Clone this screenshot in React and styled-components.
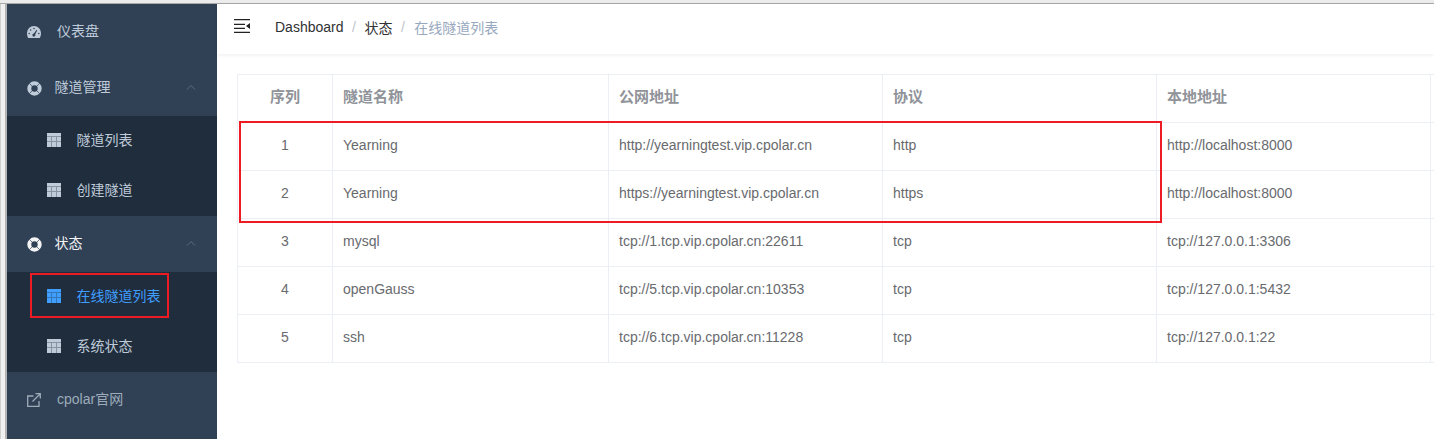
import styled, { createGlobalStyle } from "styled-components";

const rows = [
  ["1", "Yearning", "http://yearningtest.vip.cpolar.cn", "http", "http://localhost:8000"],
  ["2", "Yearning", "https://yearningtest.vip.cpolar.cn", "https", "http://localhost:8000"],
  ["3", "mysql", "tcp://1.tcp.vip.cpolar.cn:22611", "tcp", "tcp://127.0.0.1:3306"],
  ["4", "openGauss", "tcp://5.tcp.vip.cpolar.cn:10353", "tcp", "tcp://127.0.0.1:5432"],
  ["5", "ssh", "tcp://6.tcp.vip.cpolar.cn:11228", "tcp", "tcp://127.0.0.1:22"],
];

const GlobalStyle = createGlobalStyle`
  html, body {
    margin: 0;
    padding: 0;
    height: 439px;
    overflow: hidden;
    background: #fff;
  }
  body {
    font-family: "Liberation Sans", "Noto Sans CJK SC", sans-serif;
  }
`;

const Frame = styled.div`
  width: 1434px;
  height: 439px;
  position: relative;
  overflow: hidden;
  display: flex;
  flex-direction: column;
`;

const TopStrip = styled.div`
  height: 3px;
  background: #ececec;
  border-bottom: 1px solid #a9a9a9;
`;

const Body = styled.div`
  flex: 1;
  display: flex;
  min-height: 0;
`;

const LeftStrip = styled.div`
  width: 4px;
  background: #f0f0f0;
  border-left: 1px solid #cfcfcf;
  border-right: 2px solid #b4b4b4;
`;

const Sidebar = styled.nav`
  width: 210px;
  background: #304156;
  font-size: 14px;
  color: #bfcbd9;
`;

const MenuItem = styled.div`
  height: 56px;
  display: flex;
  align-items: center;
  padding-left: 20px;
  color: ${(p) => (p.$open ? "#f4f4f5" : p.$dim ? "#9eabb9" : "#bfcbd9")};
  position: relative;
`;

const MenuLabel = styled.span`
  margin-left: ${(p) => p.$gap}px;
  margin-bottom: 4px;
`;

const Arrow = styled.svg`
  position: absolute;
  right: 21px;
  top: 24px;
`;

const SubMenu = styled.div`
  background: #1f2d3d;
`;

const SubItem = styled.div`
  height: 50px;
  display: flex;
  align-items: center;
  padding-left: 40px;
  color: ${(p) => (p.$active ? "#409eff" : "#bfcbd9")};

  svg {
    margin-bottom: 2px;
  }
`;

const SubLabel = styled.span`
  margin-left: 15.5px;
  margin-bottom: 4px;
`;

const Main = styled.div`
  flex: 1;
  min-width: 0;
`;

const Header = styled.header`
  height: 50px;
  box-sizing: border-box;
  display: flex;
  align-items: center;
  background: #fff;
  box-shadow: 0 1px 4px rgba(0, 21, 41, 0.08);
  padding: 0 0 4px 17px;

  svg {
    margin-bottom: 3px;
  }
`;

const Crumbs = styled.div`
  margin-left: 25px;
  display: flex;
  align-items: center;
  font-size: 14px;
  color: #303133;
`;

const Sep = styled.span`
  margin: 0 8.5px;
  color: #c0c4cc;
`;

const Current = styled.span`
  color: #97a8be;
  margin-left: 1px;
`;

const Content = styled.div`
  padding: 20px 0 0 20px;
`;

const Table = styled.div`
  width: 1300px;
  border-top: 1px solid #ebeef5;
  border-left: 1px solid #ebeef5;
  font-size: 14px;
  color: #606266;
`;

const Row = styled.div`
  display: grid;
  grid-template-columns: 95px 276px 274px 274px 274px 107px;
  height: 48px;
`;

const Cell = styled.div`
  display: flex;
  box-sizing: border-box;
  align-items: center;
  justify-content: ${(p) => (p.$center ? "center" : "flex-start")};
  padding-left: ${(p) => (p.$center ? 0 : 10)}px;
  padding-bottom: ${(p) => (p.$head ? 6 : 4)}px;
  border-right: 1px solid #ebeef5;
  border-bottom: 1px solid #ebeef5;
  color: ${(p) => (p.$head ? "#909399" : "#686a6e")};
  font-size: ${(p) => (p.$head ? 15 : 14)}px;
  font-weight: ${(p) => (p.$head ? 700 : 400)};
`;

const RedBox = styled.div`
  position: absolute;
  border: 2px solid #ed1c24;
  left: ${(p) => p.$x}px;
  top: ${(p) => p.$y}px;
  width: ${(p) => p.$w}px;
  height: ${(p) => p.$h}px;
`;

function GaugeIcon() {
  return (
    <svg width="14" height="12" viewBox="0 0 14 12">
      <path
        fill="currentColor"
        fillRule="evenodd"
        d="M7 0a7 7 0 0 1 7 7c0 2-.5 3.600-1.200 5H1.200C.5 10.600 0 9 0 7a7 7 0 0 1 7-7zM7 1.700a.8.8 0 1 0 0 1.600.8.8 0 0 0 0-1.600zM3.600 3.200a.8.8 0 1 0 0 1.600.8.8 0 0 0 0-1.600zM2.200 6.700a.8.8 0 1 0 0 1.600.8.8 0 0 0 0-1.600zM11.800 6.700a.8.8 0 1 0 0 1.600.8.8 0 0 0 0-1.600zM9.500 3.800L6.900 7.600a1.500 1.500 0 1 0 1.300.8l2-4.200z"
      />
    </svg>
  );
}

function RingIcon() {
  return (
    <svg width="15" height="15" viewBox="0 0 15 15">
      <circle cx="7.500" cy="7.500" r="5.200" fill="none" stroke="currentColor" strokeWidth="4" />
      <path
        d="M2.200 2.200L5 5M12.800 2.200L10 5M2.200 12.800L5 10M12.800 12.800L10 10"
        stroke="#304156"
        strokeWidth="1"
        opacity="0.7"
      />
    </svg>
  );
}

function GridIcon() {
  return (
    <svg width="14" height="14" viewBox="0 0 14 14">
      <rect width="14" height="14" fill="currentColor" />
      <path d="M4.500 4V14M9.500 4V14M0 3.500H14M0 8.500H14" stroke="#1f2d3d" strokeWidth="1" opacity="0.35" />
    </svg>
  );
}

function ExternalIcon() {
  return (
    <svg width="14" height="14" viewBox="0 0 14 14" fill="none" stroke="currentColor" strokeWidth="1.300">
      <path d="M6.500 3H.700v10.300H12V8" />
      <path d="M5.500 8.500L13 1M8.500.700h4.800v4.800" />
    </svg>
  );
}

function HamburgerIcon() {
  return (
    <svg width="16" height="14" viewBox="0 0 16 14" fill="#222">
      <path d="M0 0h16v1.300H0zM0 4.700h11v1.300H0zM0 8.700h11v1.300H0zM0 12.700h16v1.300H0zM16 4v6l-4-3z" />
    </svg>
  );
}

function ChevronUp() {
  return (
    <Arrow width="10" height="6" viewBox="0 0 10 6" fill="none" stroke="#5d6b7c" strokeWidth="1">
      <path d="M1 5.500l4-4 4 4" />
    </Arrow>
  );
}

export default function App() {
  return (
    <>
      <GlobalStyle />
      <Frame>
        <TopStrip />
        <Body>
          <LeftStrip />
          <Sidebar>
            <MenuItem>
              <GaugeIcon />
              <MenuLabel $gap={16}>仪表盘</MenuLabel>
            </MenuItem>
            <MenuItem>
              <RingIcon />
              <MenuLabel $gap={12.5}>隧道管理</MenuLabel>
              <ChevronUp />
            </MenuItem>
            <SubMenu>
              <SubItem>
                <GridIcon />
                <SubLabel>隧道列表</SubLabel>
              </SubItem>
              <SubItem>
                <GridIcon />
                <SubLabel>创建隧道</SubLabel>
              </SubItem>
            </SubMenu>
            <MenuItem $open>
              <RingIcon />
              <MenuLabel $gap={12.5}>状态</MenuLabel>
              <ChevronUp />
            </MenuItem>
            <SubMenu>
              <SubItem $active>
                <GridIcon />
                <SubLabel>在线隧道列表</SubLabel>
              </SubItem>
              <SubItem>
                <GridIcon />
                <SubLabel>系统状态</SubLabel>
              </SubItem>
            </SubMenu>
            <MenuItem $dim>
              <ExternalIcon />
              <MenuLabel $gap={16}>cpolar官网</MenuLabel>
            </MenuItem>
          </Sidebar>
          <Main>
            <Header>
              <HamburgerIcon />
              <Crumbs>
                <span>Dashboard</span>
                <Sep>/</Sep>
                <span>状态</span>
                <Sep>/</Sep>
                <Current>在线隧道列表</Current>
              </Crumbs>
            </Header>
            <Content>
              <Table>
                <Row>
                  <Cell $head $center>序列</Cell>
                  <Cell $head>隧道名称</Cell>
                  <Cell $head>公网地址</Cell>
                  <Cell $head>协议</Cell>
                  <Cell $head>本地地址</Cell>
                  <Cell $head />
                </Row>
                {rows.map((r) => (
                  <Row key={r[0]}>
                    <Cell $center>{r[0]}</Cell>
                    <Cell>{r[1]}</Cell>
                    <Cell>{r[2]}</Cell>
                    <Cell>{r[3]}</Cell>
                    <Cell>{r[4]}</Cell>
                    <Cell />
                  </Row>
                ))}
              </Table>
            </Content>
          </Main>
        </Body>
        <RedBox $x={239} $y={121} $w={919} $h={98} />
        <RedBox $x={30} $y={273} $w={135} $h={41} />
      </Frame>
    </>
  );
}
